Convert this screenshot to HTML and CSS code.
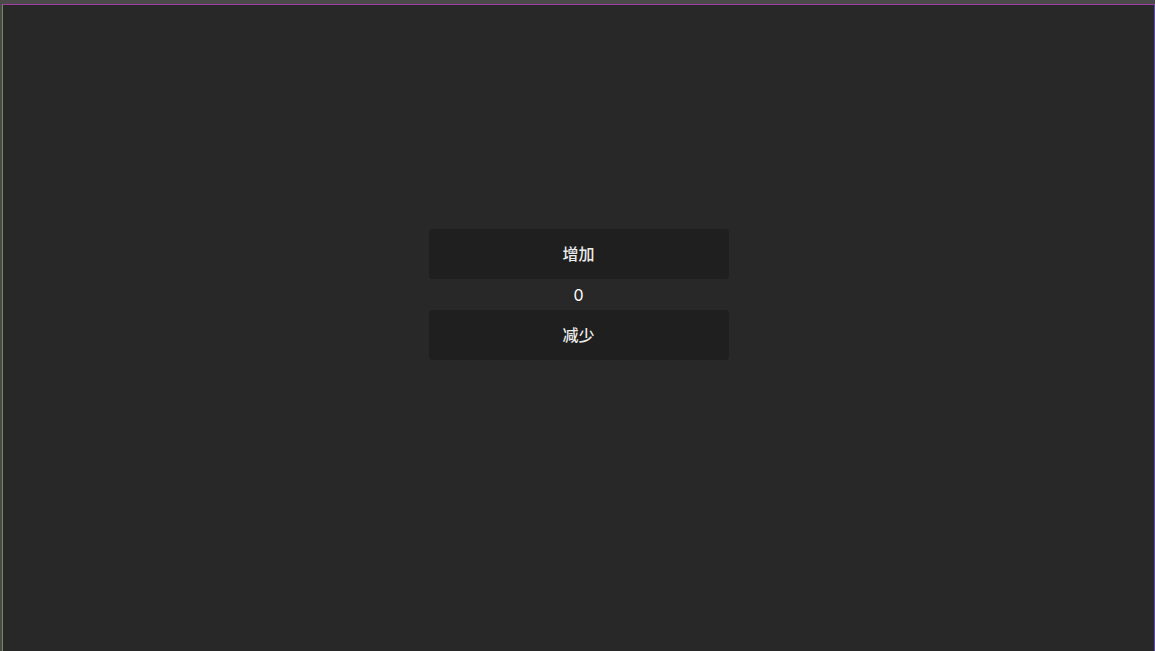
FILE: index.html
```html
<!DOCTYPE html>
<html lang="zh">
<head>
<meta charset="utf-8">
<title>Counter</title>
<link rel="stylesheet" href="styles.css">
</head>
<body>
<div class="app">
  <div class="canvas">
    <div class="counter">
      <button class="btn">增加</button>
      <div class="value">0</div>
      <button class="btn">减少</button>
    </div>
  </div>
</div>
</body>
</html>
```
FILE: styles.css
```css
html, body {
  margin: 0;
  padding: 0;
  height: 100%;
  background: #4a4a4a;
}
.app {
  box-sizing: border-box;
  height: 651px;
  padding-top: 4px;
  padding-left: 2px;
  display: flex;
  flex-direction: column;
  font-family: "Noto Sans CJK SC", "Noto Sans", sans-serif;
}
.canvas {
  flex: 1;
  background: #282828;
  border-top: 1px solid #a23ca6;
  border-left: 1px solid #6e8c5c;
  border-right: 1px solid #5a4aa8;
  display: flex;
  justify-content: center;
  align-items: flex-start;
  padding-top: 224px;
}
.counter {
  width: 300px;
  display: flex;
  flex-direction: column;
  align-items: stretch;
  gap: 6px;
}
.btn {
  height: 50px;
  border: none;
  border-radius: 4px;
  background: #1f1f1f;
  color: #ececec;
  font-family: "Noto Sans CJK SC", "Noto Sans", sans-serif;
  font-size: 16px;
  font-weight: 500;
  line-height: 1;
  padding: 0 0 3px 0;
}
.value {
  text-align: center;
  color: #ffffff;
  font-family: "Inter", "Noto Sans", sans-serif;
  font-size: 16px;
  line-height: 19px;
  padding-top: 1px;
  margin-bottom: -1px;
}
```
